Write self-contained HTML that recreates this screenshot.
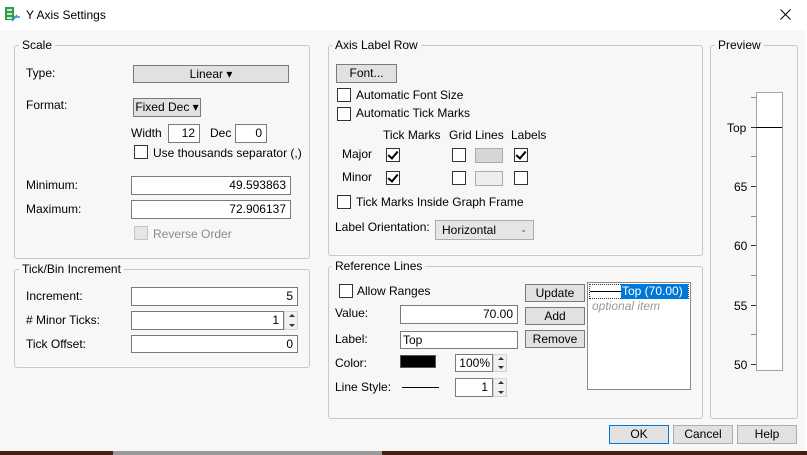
<!DOCTYPE html>
<html><head><meta charset="utf-8"><style>
*{box-sizing:border-box;margin:0;padding:0}
body{width:807px;height:455px;overflow:hidden;background:#fff;font-family:"Liberation Sans",sans-serif;font-size:12px;color:#000;position:relative}
.a{position:absolute}
.body{position:absolute;left:0;top:30px;width:806px;height:421px;background:#f7f7f7}
.grp{position:absolute;border:1px solid #c8c8c8;border-radius:3px}
.gt{position:absolute;background:#f7f7f7;padding:0 3px;line-height:14px}
.t{position:absolute;line-height:14px;white-space:nowrap}
.in{position:absolute;background:#fff;border:1px solid #7a7a7a;text-align:right;padding-right:4px;line-height:16px;font-size:12px}
.btn{position:absolute;background:#e1e1e1;border:1px solid #adadad;text-align:center;line-height:16px}
.cb{position:absolute;width:14px;height:14px;background:#fff;border:1px solid #333}
.ck::after{content:"";position:absolute;left:3px;top:0px;width:4px;height:8px;border:solid #000;border-width:0 2px 2px 0;transform:rotate(40deg)}
.sp{position:absolute;width:14px;background:#f0f0f0;border:1px solid #c8d4e0}
.sp::before{content:"";position:absolute;left:4px;top:2px;border:3px solid transparent;border-bottom:3px solid #333;border-top:0}
.sp::after{content:"";position:absolute;left:4px;bottom:2px;border:3px solid transparent;border-top:3px solid #333;border-bottom:0}
</style></head><body>
<svg class="a" style="left:4px;top:6px" width="18" height="18"><rect x="1" y="1" width="9" height="13" fill="#2e9e3e"/><rect x="3" y="3" width="5" height="2" fill="#cfe8d2"/><rect x="3" y="7" width="5" height="2" fill="#cfe8d2"/><rect x="3" y="11" width="5" height="2" fill="#cfe8d2"/><path d="M8 15 L13 9 M10 11 L16 11" stroke="#3a8ad8" stroke-width="1.5"/></svg>
<div class="t" style="left:26px;top:8px">Y Axis Settings</div>
<svg class="a" style="left:780px;top:9px" width="11" height="11"><path d="M0.5 0.5 L10.5 10.5 M10.5 0.5 L0.5 10.5" stroke="#000" stroke-width="1"/></svg>
<div class="body"></div>
<div class="a" style="left:0;top:451px;width:807px;height:4px;background:#4a1d12"></div>
<div class="a" style="left:113px;top:451px;width:269px;height:4px;background:#9a9a9a"></div>

<!-- Scale -->
<div class="grp" style="left:14px;top:45px;width:296px;height:214px"></div>
<div class="gt" style="left:19px;top:38px">Scale</div>
<div class="t" style="left:26px;top:66px">Type:</div>
<div class="btn" style="left:133px;top:65px;width:156px;height:18px;border-color:#7a7a7a">Linear ▾</div>
<div class="t" style="left:26px;top:98px">Format:</div>
<div class="btn" style="left:133px;top:98px;width:68px;height:19px;border-color:#7a7a7a">Fixed Dec ▾</div>
<div class="t" style="left:131px;top:126px">Width</div>
<div class="in" style="left:168px;top:124px;width:32px;height:19px">12</div>
<div class="t" style="left:210px;top:126px">Dec</div>
<div class="in" style="left:235px;top:124px;width:32px;height:19px">0</div>
<div class="cb" style="left:134px;top:145px"></div>
<div class="t" style="left:153px;top:146px">Use thousands separator (,)</div>
<div class="t" style="left:26px;top:178px">Minimum:</div>
<div class="in" style="left:131px;top:176px;width:160px;height:19px">49.593863</div>
<div class="t" style="left:26px;top:202px">Maximum:</div>
<div class="in" style="left:131px;top:200px;width:160px;height:19px">72.906137</div>
<div class="cb" style="left:134px;top:226px;background:#e6e6e6;border-color:#c4c4c4"></div>
<div class="t" style="left:153px;top:227px;color:#8a8a8a">Reverse Order</div>

<!-- Tick/Bin -->
<div class="grp" style="left:14px;top:269px;width:296px;height:99px"></div>
<div class="gt" style="left:19px;top:262px">Tick/Bin Increment</div>
<div class="t" style="left:26px;top:289px">Increment:</div>
<div class="in" style="left:131px;top:287px;width:167px;height:19px">5</div>
<div class="t" style="left:26px;top:313px"># Minor Ticks:</div>
<div class="in" style="left:131px;top:311px;width:153px;height:19px">1</div>
<div class="sp" style="left:284px;top:311px;height:19px"></div>
<div class="t" style="left:26px;top:337px">Tick Offset:</div>
<div class="in" style="left:131px;top:335px;width:167px;height:18px">0</div>

<!-- Axis Label Row -->
<div class="grp" style="left:328px;top:45px;width:375px;height:211px"></div>
<div class="gt" style="left:332px;top:38px">Axis Label Row</div>
<div class="btn" style="left:336px;top:64px;width:61px;height:19px;border-color:#7a7a7a">Font...</div>
<div class="cb" style="left:337px;top:88px"></div><div class="t" style="left:356px;top:88px">Automatic Font Size</div>
<div class="cb" style="left:337px;top:107px"></div><div class="t" style="left:356px;top:106px">Automatic Tick Marks</div>
<div class="t" style="left:383px;top:128px">Tick Marks</div>
<div class="t" style="left:449px;top:128px">Grid Lines</div>
<div class="t" style="left:511px;top:128px">Labels</div>
<div class="t" style="left:342px;top:147px">Major</div>
<div class="cb ck" style="left:386px;top:148px"></div>
<div class="cb" style="left:452px;top:148px"></div>
<div class="a" style="left:475px;top:148px;width:28px;height:15px;background:#d6d6d6;border:1px solid #aaa"></div>
<div class="cb ck" style="left:514px;top:148px"></div>
<div class="t" style="left:342px;top:170px">Minor</div>
<div class="cb ck" style="left:386px;top:171px"></div>
<div class="cb" style="left:452px;top:171px"></div>
<div class="a" style="left:475px;top:171px;width:28px;height:15px;background:#eee;border:1px solid #aaa"></div>
<div class="cb" style="left:514px;top:171px"></div>
<div class="cb" style="left:337px;top:195px"></div><div class="t" style="left:356px;top:195px">Tick Marks Inside Graph Frame</div>
<div class="t" style="left:335px;top:220px">Label Orientation:</div>
<div class="a" style="left:435px;top:220px;width:99px;height:20px;background:#e5e5e5;border:1px solid #acacac;padding-left:6px;line-height:18px">Horizontal<span style="position:absolute;right:6px;font-size:8px;color:#555">⌄</span></div>

<!-- Reference Lines -->
<div class="grp" style="left:328px;top:266px;width:375px;height:153px"></div>
<div class="gt" style="left:332px;top:259px">Reference Lines</div>
<div class="cb" style="left:339px;top:284px"></div><div class="t" style="left:357px;top:284px">Allow Ranges</div>
<div class="t" style="left:335px;top:306px">Value:</div>
<div class="in" style="left:400px;top:305px;width:118px;height:19px">70.00</div>
<div class="t" style="left:335px;top:332px">Label:</div>
<div class="in" style="left:400px;top:331px;width:118px;height:18px;text-align:left;padding-left:2px">Top</div>
<div class="t" style="left:335px;top:356px">Color:</div>
<div class="a" style="left:400px;top:355px;width:36px;height:13px;background:#000;border:1px solid #555"></div>
<div class="in" style="left:455px;top:354px;width:38px;height:18px;padding-right:2px">100%</div>
<div class="sp" style="left:493px;top:354px;height:18px"></div>
<div class="t" style="left:335px;top:380px">Line Style:</div>
<div class="a" style="left:402px;top:387px;width:37px;height:1px;background:#000"></div>
<div class="in" style="left:455px;top:378px;width:38px;height:19px">1</div>
<div class="sp" style="left:493px;top:378px;height:19px"></div>
<div class="btn" style="left:525px;top:284px;width:60px;height:18px;border-color:#7a7a7a">Update</div>
<div class="btn" style="left:525px;top:307px;width:60px;height:18px;border-color:#7a7a7a">Add</div>
<div class="btn" style="left:525px;top:330px;width:60px;height:18px;border-color:#7a7a7a">Remove</div>
<div class="a" style="left:587px;top:282px;width:104px;height:108px;background:#fff;border:1px solid #8a8a8a"></div>
<div class="a" style="left:589px;top:284px;width:100px;height:15px;border:1px dotted #333"></div>
<div class="a" style="left:590px;top:291px;width:31px;height:1px;background:#000"></div>
<div class="a" style="left:621px;top:284px;width:67px;height:15px;background:#0078d7;color:#fff;line-height:14px;padding-left:1px">Top (70.00)</div>
<div class="t" style="left:592px;top:299px;color:#999;font-style:italic">optional item</div>

<!-- Preview -->
<div class="grp" style="left:710px;top:45px;width:88px;height:374px"></div>
<div class="gt" style="left:715px;top:38px">Preview</div>
<div class="a" style="left:756px;top:92px;width:27px;height:279px;background:#fff;border:1px solid #a5a5a5"></div>
<div class="a" style="left:756px;top:127px;width:26px;height:1px;background:#000"></div>
<div class="a" style="left:751px;top:97px;width:5px;height:1px;background:#888"></div>
<div class="a" style="left:751px;top:127px;width:5px;height:1px;background:#333"></div>
<div class="a" style="left:751px;top:156px;width:5px;height:1px;background:#888"></div>
<div class="a" style="left:751px;top:186px;width:5px;height:1px;background:#333"></div>
<div class="a" style="left:751px;top:216px;width:5px;height:1px;background:#888"></div>
<div class="a" style="left:751px;top:245px;width:5px;height:1px;background:#333"></div>
<div class="a" style="left:751px;top:275px;width:5px;height:1px;background:#888"></div>
<div class="a" style="left:751px;top:305px;width:5px;height:1px;background:#333"></div>
<div class="a" style="left:751px;top:334px;width:5px;height:1px;background:#888"></div>
<div class="a" style="left:751px;top:364px;width:5px;height:1px;background:#333"></div>
<div class="t" style="left:727px;top:121px">Top</div>
<div class="t" style="left:734px;top:180px">65</div>
<div class="t" style="left:734px;top:239px">60</div>
<div class="t" style="left:734px;top:299px">55</div>
<div class="t" style="left:734px;top:358px">50</div>

<!-- Bottom buttons -->
<div class="btn" style="left:609px;top:425px;width:60px;height:19px;border-color:#0078d7">OK</div>
<div class="btn" style="left:673px;top:425px;width:60px;height:19px">Cancel</div>
<div class="btn" style="left:737px;top:425px;width:60px;height:19px">Help</div>
</body></html>
